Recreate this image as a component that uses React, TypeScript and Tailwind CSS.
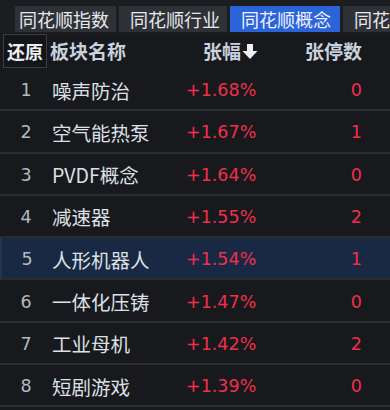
const rows = [
  { no: 1, name: "噪声防治", pct: "+1.68%", count: 0 },
  { no: 2, name: "空气能热泵", pct: "+1.67%", count: 1 },
  { no: 3, name: "PVDF概念", pct: "+1.64%", count: 0 },
  { no: 4, name: "减速器", pct: "+1.55%", count: 2 },
  { no: 5, name: "人形机器人", pct: "+1.54%", count: 1 },
  { no: 6, name: "一体化压铸", pct: "+1.47%", count: 0 },
  { no: 7, name: "工业母机", pct: "+1.42%", count: 2 },
  { no: 8, name: "短剧游戏", pct: "+1.39%", count: 0 },
];

const tabs = [
  { label: "同花顺指数", w: "w-[101px]", pad: "pl-[4px]" },
  { label: "同花顺行业", w: "w-[108px]", pad: "pl-[11px]" },
  { label: "同花顺概念", w: "w-[110px]", pad: "pl-[11px]", active: true },
  { label: "同花顺概念", w: "w-[60px]", pad: "pl-[11px]" },
];

const num = { fontFamily: '"DejaVu Sans", "Noto Sans CJK SC", sans-serif' };

export default function App() {
  return (
    <div
      className="w-[390px] h-[410px] overflow-hidden bg-[#17191d] text-[#d6dae2]"
      style={{ fontFamily: '"Noto Sans CJK SC", "Noto Sans", sans-serif' }}
    >
      <div className="flex h-[33px] items-start gap-[3px] overflow-hidden bg-[#1b1d21] pl-[15px] pt-[6px]">
        {tabs.map((t, i) => (
          <div
            key={i}
            className={`${t.w} ${t.pad} h-[26px] shrink-0 overflow-hidden whitespace-nowrap text-[18px] leading-[26px] ${
              t.active ? "bg-[#2b63d9] text-[#eef2fb]" : "bg-[#2e3136] text-[#e6e8ec]"
            }`}
          >
            {t.label}
          </div>
        ))}
      </div>

      <div className="flex h-[36px] items-center text-[19px] font-bold text-[#c9d1de]">
        <div className="ml-[3px] flex h-[34px] w-[44px] items-center justify-center border border-[#3b3e44] bg-[#131518] text-[18px] text-[#eceef2]">
          还原
        </div>
        <div className="ml-[3px] w-[153px]">板块名称</div>
        <div className="flex w-[100px] items-center">
          张幅
          <svg width="16" height="17" viewBox="0 0 16 17" className="ml-[1px]">
            <path d="M5 1h6v7h4.5L8 16 0.5 8H5z" fill="#eef0f4" />
          </svg>
        </div>
        <div className="flex-1 pr-[28px] text-right">张停数</div>
      </div>

      <div>
        {rows.map((r) => (
          <div
            key={r.no}
            className={`flex h-[42.3px] items-center border-b-2 border-[#2a2c31] pt-[2px] ${
              r.no === 5 ? "bg-[#1a2943] border-l-2 border-l-[#24344f]" : ""
            }`}
          >
            <div
              className={`${r.no === 5 ? "w-[50px]" : "w-[52px]"} text-center text-[17.5px] text-[#b4b9c2]`}
              style={num}
            >
              {r.no}
            </div>
            <div className="w-[134px] text-[19.5px] text-[#dde0e6]">{r.name}</div>
            <div className="w-[110px] text-[17.5px] text-[#ef2f4c]" style={num}>
              {r.pct}
            </div>
            <div className="flex-1 pr-[28px] text-right text-[17.5px] text-[#ef2f4c]" style={num}>
              {r.count}
            </div>
          </div>
        ))}
      </div>
    </div>
  );
}
